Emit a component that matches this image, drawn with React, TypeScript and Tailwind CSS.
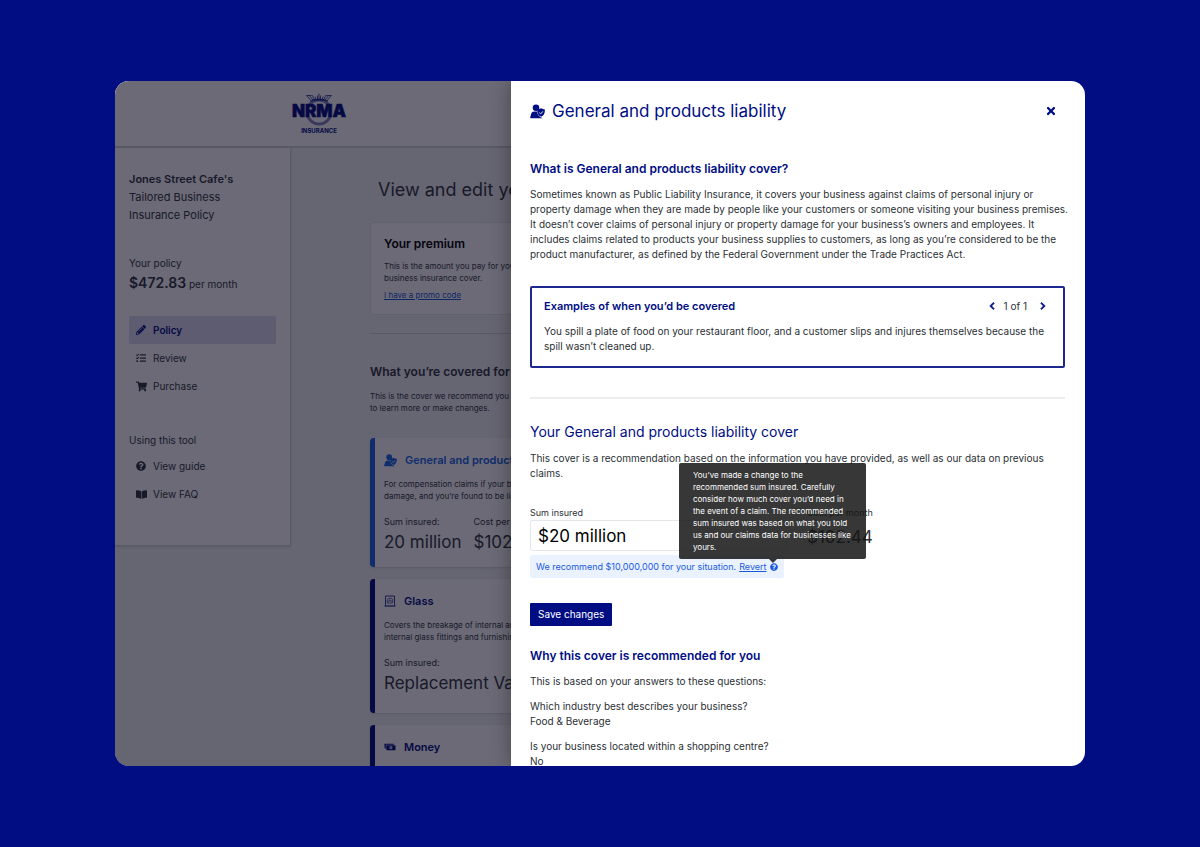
import type { ReactNode } from "react";
import {
  FaBookOpen,
  FaChevronLeft,
  FaChevronRight,
  FaPencilAlt,
  FaQuestionCircle,
  FaShoppingCart,
  FaTasks,
  FaTimes,
} from "react-icons/fa";

function LiabilityIcon({ className }: { className: string }) {
  return (
    <svg viewBox="0 0 16 16" className={className} aria-hidden="true">
      <circle cx="6.4" cy="3.9" r="3.5" fill="currentColor" />
      <path
        fill="currentColor"
        d="M4.600 8h3C7.400 11 9.500 13.600 13.500 15.200H1C.3 15.200 0 14.800.2 14.200L1.300 10.500C1.800 8.900 3 8 4.600 8Z"
      />
      <path
        fill="currentColor"
        d="M11.800 4.600c1.200.8 2.600 1.200 4 1.200.3 3.800-.9 6.500-4 7.900-3.100-1.400-4.300-4.100-4-7.900 1.400 0 2.800-.4 4-1.200Z"
      />
      <path d="m10 9.200 1.400 1.300 2.300-2.600" fill="none" stroke="white" strokeWidth="1" />
    </svg>
  );
}

function GlassIcon() {
  return (
    <svg viewBox="0 0 12 12" className="size-3" fill="none" stroke="currentColor" aria-hidden="true">
      <path d="M1.500 10V1h9v9" strokeWidth=".8" />
      <path d="M.5 11h11" strokeWidth="1.100" />
      <path d="M3.300 7.800V5l1.400-1.700h3.200l1 1.500-.6 3.200H3.300Z" strokeWidth=".6" />
      <path d="m4.800 6.900.4-2 1.800.5.3 1.600" strokeWidth=".6" />
    </svg>
  );
}

function MoneyIcon() {
  return (
    <svg viewBox="0 0 12 12" className="size-3" aria-hidden="true">
      <path d="M.5 2.800h9.300v1H1.800v4C.9 7.500.5 7 .5 6.200Z" fill="currentColor" />
      <rect x="2.300" y="4.200" width="9.200" height="5" rx=".6" fill="currentColor" />
      <ellipse cx="6.900" cy="6.700" rx="1.500" ry="1.600" fill="white" />
      <path d="M6.900 5.700v2" stroke="currentColor" strokeWidth=".8" />
    </svg>
  );
}

function Logo() {
  return (
    <svg viewBox="0 0 56 42" className="h-[42px] w-14 text-[#000d83]" role="img" aria-label="NRMA Insurance">
      <g fill="none" stroke="currentColor">
        <circle cx="28" cy="19" r="12" strokeWidth="3" opacity=".5" />
        <path
          d="M15.500 2.500 20 7.500M18.500 2.800 22 7M21 2l2.500 5M24 3.500l1 3.500M26.500 2.500V7M28 .5V7M29.500 2.500V7M32 3.500 31 7M35 2l-2.500 5M37.500 2.800 34 7M40.500 2.500 36 7.500M15.500 2.500h5M40.500 2.500h-5"
          strokeWidth="1"
          opacity=".7"
        />
        <path d="M19 8.200C25 6.300 31 6.300 37 8.200" strokeWidth="1.400" opacity=".7" />
      </g>
      <path d="M14 11.500h28v12.600H14Z" fill="white" />
      <text
        x="28"
        y="23.500"
        textAnchor="middle"
        fontSize="17"
        fontWeight="900"
        fill="currentColor"
        stroke="currentColor"
        strokeWidth=".5"
        fontFamily="Inter, sans-serif"
      >
        NRMA
      </text>
      <text x="28" y="40" textAnchor="middle" fontSize="6" fontWeight="700" fill="currentColor" fontFamily="Inter, sans-serif">
        INSURANCE
      </text>
    </svg>
  );
}

function NavItem({ icon, label, active = false }: { icon: ReactNode; label: string; active?: boolean }) {
  return (
    <a
      href="#"
      className={
        active
          ? "flex h-7 items-center gap-1.5 rounded-xs bg-[#dfddf0] px-1.5 font-semibold text-[#000d83]"
          : "flex h-7 items-center gap-1.5 px-1.5"
      }
    >
      <span className="flex w-3 justify-center">{icon}</span>
      {label}
    </a>
  );
}

function Sidebar() {
  return (
    <aside className="h-[398px] w-44 shrink-0 border-r border-b border-[#d5d5da] bg-white px-[14px] pt-[22px] text-[10px] shadow-sm">
      <p className="text-[11px] leading-[18px]">
        <b className="font-semibold">Jones Street Cafe&apos;s</b>
        <br />
        Tailored Business
        <br />
        Insurance Policy
      </p>
      <p className="mt-[31px] leading-4">Your policy</p>
      <p className="leading-6">
        <b className="text-[14px] font-semibold">$472.83</b> per month
      </p>
      <nav className="mt-5">
        <NavItem active icon={<FaPencilAlt className="size-2.5" />} label="Policy" />
        <NavItem icon={<FaTasks className="size-2.5" />} label="Review" />
        <NavItem icon={<FaShoppingCart className="size-[11px]" />} label="Purchase" />
      </nav>
      <h2 className="mt-8 leading-4">Using this tool</h2>
      <nav className="mt-1">
        <NavItem icon={<FaQuestionCircle className="size-2.5" />} label="View guide" />
        <NavItem icon={<FaBookOpen className="size-[11px]" />} label="View FAQ" />
      </nav>
    </aside>
  );
}

function CoverCard({
  tone,
  icon,
  title,
  children,
}: {
  tone: "blue" | "navy";
  icon: ReactNode;
  title: string;
  children?: ReactNode;
}) {
  return (
    <article
      className={
        tone === "blue"
          ? "rounded border-l-[5px] border-[#1a66e6] bg-white px-[9px] pt-[14px] pb-[13px] shadow"
          : "rounded border-l-[5px] border-[#000d83] bg-white px-[9px] pt-[14px] pb-[18px] shadow"
      }
    >
      <h3
        className={
          tone === "blue"
            ? "flex items-center gap-2 text-[11px] leading-4 font-semibold text-[#1a66e6]"
            : "flex items-center gap-2 text-[11px] leading-4 font-semibold text-[#000d83]"
        }
      >
        {icon}
        {title}
      </h3>
      {children}
    </article>
  );
}

function Figure({ label, value }: { label: string; value: string }) {
  return (
    <div>
      <dt className="text-[9px] leading-3">{label}</dt>
      <dd className="mt-0.5 text-[17px] leading-6">{value}</dd>
    </div>
  );
}

function PolicyPage() {
  return (
    <div className="relative min-w-0 flex-1 overflow-hidden bg-[#f2f2f5] whitespace-nowrap text-[#33383f]">
      <header className="flex h-[67px] justify-center border-b-2 border-[#d5d5da] bg-white pt-3 pl-3">
        <Logo />
      </header>
      <div className="flex">
        <Sidebar />
        <main className="w-[600px] shrink-0 pt-7 pl-[79px]">
          <h1 className="pl-2 text-[18px] leading-7">View and edit your policy</h1>
          <section className="mt-[18px] rounded border border-[#e6e6ea] bg-white px-[13px] py-[13px]">
            <h2 className="text-[12px] leading-4 font-semibold text-black">Your premium</h2>
            <p className="mt-2 text-[8px] leading-3">
              This is the amount you pay for your tailored
              <br />
              business insurance cover.
            </p>
            <a href="#" className="mt-[5px] block text-[8px] leading-3 text-[#1a5ad6] underline">
              I have a promo code
            </a>
          </section>
          <hr className="mt-[18px] border-[#d5d5da]" />
          <h2 className="mt-[30px] text-[12px] leading-4 font-semibold">What you’re covered for</h2>
          <p className="mt-[10px] text-[8px] leading-3">
            This is the cover we recommend you consider. Select one
            <br />
            to learn more or make changes.
          </p>
          <div className="mt-6 space-y-3">
            <CoverCard tone="blue" icon={<LiabilityIcon className="size-[13px]" />} title="General and products liability">
              <p className="mt-[10px] text-[8px] leading-3">
                For compensation claims if your business causes injury or
                <br />
                damage, and you’re found to be liable.
              </p>
              <dl className="mt-[14px] flex gap-3">
                <Figure label="Sum insured:" value="20 million" />
                <Figure label="Cost per month:" value="$102.44" />
              </dl>
            </CoverCard>
            <CoverCard tone="navy" icon={<GlassIcon />} title="Glass">
              <p className="mt-[10px] text-[8px] leading-3">
                Covers the breakage of internal and external glass,
                <br />
                internal glass fittings and furnishings.
              </p>
              <dl className="mt-[14px]">
                <Figure label="Sum insured:" value="Replacement Value" />
              </dl>
            </CoverCard>
            <CoverCard tone="navy" icon={<MoneyIcon />} title="Money" />
          </div>
        </main>
      </div>
      <div className="absolute inset-0 bg-[#08061b]/60" />
    </div>
  );
}

function Tooltip() {
  return (
    <div
      role="tooltip"
      className="absolute bottom-[19px] left-[149px] w-[187px] rounded-xs bg-[#141414]/85 py-1.5 pl-3.5 text-[8px] leading-3 whitespace-nowrap text-white"
    >
      You’ve made a change to the
      <br />
      recommended sum insured. Carefully
      <br />
      consider how much cover you’d need in
      <br />
      the event of a claim. The recommended
      <br />
      sum insured was based on what you told
      <br />
      us and our claims data for businesses like
      <br />
      yours.
      <span className="absolute top-full left-[90px] border-x-4 border-t-4 border-x-transparent border-t-[#141414]/85" />
    </div>
  );
}

function CoverDrawer() {
  return (
    <section
      aria-labelledby="drawer-title"
      className="relative w-[574px] shrink-0 overflow-hidden bg-white pt-4 pr-5 pl-[19px] text-[10px] leading-[15px] text-[#2b3035] shadow-[0_0_20px_rgba(0,0,0,0.35)]"
    >
      <header className="flex h-7 items-center gap-[7px] pr-1.5 text-[#000d83]">
        <LiabilityIcon className="size-[15px]" />
        <h1 id="drawer-title" className="flex-1 text-[17px]">
          General and products liability
        </h1>
        <button type="button" aria-label="Close" className="p-0.5">
          <FaTimes className="size-3" />
        </button>
      </header>

      <h2 className="mt-9 text-[12px] leading-4 font-semibold text-[#000d83]">
        What is General and products liability cover?
      </h2>
      <p className="mt-2.5 whitespace-nowrap">
        Sometimes known as Public Liability Insurance, it covers your business against claims of personal injury or
        <br />
        property damage when they are made by people like your customers or someone visiting your business premises.
        <br />
        It doesn’t cover claims of personal injury or property damage for your business’s owners and employees. It
        <br />
        includes claims related to products your business supplies to customers, as long as you’re considered to be the
        <br />
        product manufacturer, as defined by the Federal Government under the Trade Practices Act.
      </p>

      <section className="mt-6 rounded-xs border-2 border-[#1c288f] px-3 pt-2.5 pb-3">
        <div className="flex items-center justify-between">
          <h3 className="text-[11px] leading-4 font-semibold text-[#000d83]">Examples of when you’d be covered</h3>
          <div className="flex items-center gap-2 pr-1">
            <button type="button" aria-label="Previous example" className="text-[#000d83]">
              <FaChevronLeft className="size-2 stroke-current stroke-[50]" />
            </button>
            1 of 1
            <button type="button" aria-label="Next example" className="ml-1 text-[#000d83]">
              <FaChevronRight className="size-2 stroke-current stroke-[50]" />
            </button>
          </div>
        </div>
        <p className="mt-2.5 whitespace-nowrap">
          You spill a plate of food on your restaurant floor, and a customer slips and injures themselves because the
          <br />
          spill wasn’t cleaned up.
        </p>
      </section>

      <hr className="mt-[29px] border-t-2 border-[#ededef]" />

      <h2 className="mt-[23px] text-[14px] leading-5 text-[#000d83]">Your General and products liability cover</h2>
      <p className="mt-[9px] whitespace-nowrap">
        This cover is a recommendation based on the information you have provided, as well as our data on previous
        <br />
        claims.
      </p>

      <div className="mt-[26px] flex gap-5">
        <div className="w-[257px]">
          <label htmlFor="sum-insured" className="block text-[9px] leading-3">
            Sum insured
          </label>
          <input
            id="sum-insured"
            defaultValue="$20 million"
            className="mt-px block h-[31px] w-full rounded-xs border border-[#e3e6ea] px-[7px] text-[17px] text-black"
          />
        </div>
        <div>
          <div className="text-[9px] leading-3">Cost per month</div>
          <div className="mt-1.5 text-[17px] leading-6">$102.44</div>
        </div>
      </div>
      <div className="relative mt-1 flex h-[23px] w-[254px] items-center gap-[3px] rounded-xs bg-[#ebf2ff] pl-1.5 text-[9px] whitespace-nowrap text-[#1a5ae0]">
        We recommend $10,000,000 for your situation.
        <a href="#" className="underline">
          Revert
        </a>
        <button type="button" aria-label="About this recommendation">
          <FaQuestionCircle className="size-2" />
        </button>
        <Tooltip />
      </div>

      <button type="button" className="mt-[25px] h-[23px] rounded-[1px] bg-[#000d83] px-2 text-[10px] text-white">
        Save changes
      </button>

      <h2 className="mt-[22px] text-[12px] leading-4 font-semibold text-[#000d83]">
        Why this cover is recommended for you
      </h2>
      <p className="mt-2.5">This is based on your answers to these questions:</p>
      <p className="mt-2.5">
        Which industry best describes your business?
        <br />
        Food &amp; Beverage
      </p>
      <p className="mt-2.5">
        Is your business located within a shopping centre?
        <br />
        No
      </p>
    </section>
  );
}

export default function App() {
  return (
    <div className="h-screen bg-[#000d83] px-[115px] py-[81px] font-[Inter,sans-serif]">
      <div className="flex h-full overflow-hidden rounded-[14px]">
        <PolicyPage />
        <CoverDrawer />
      </div>
    </div>
  );
}
